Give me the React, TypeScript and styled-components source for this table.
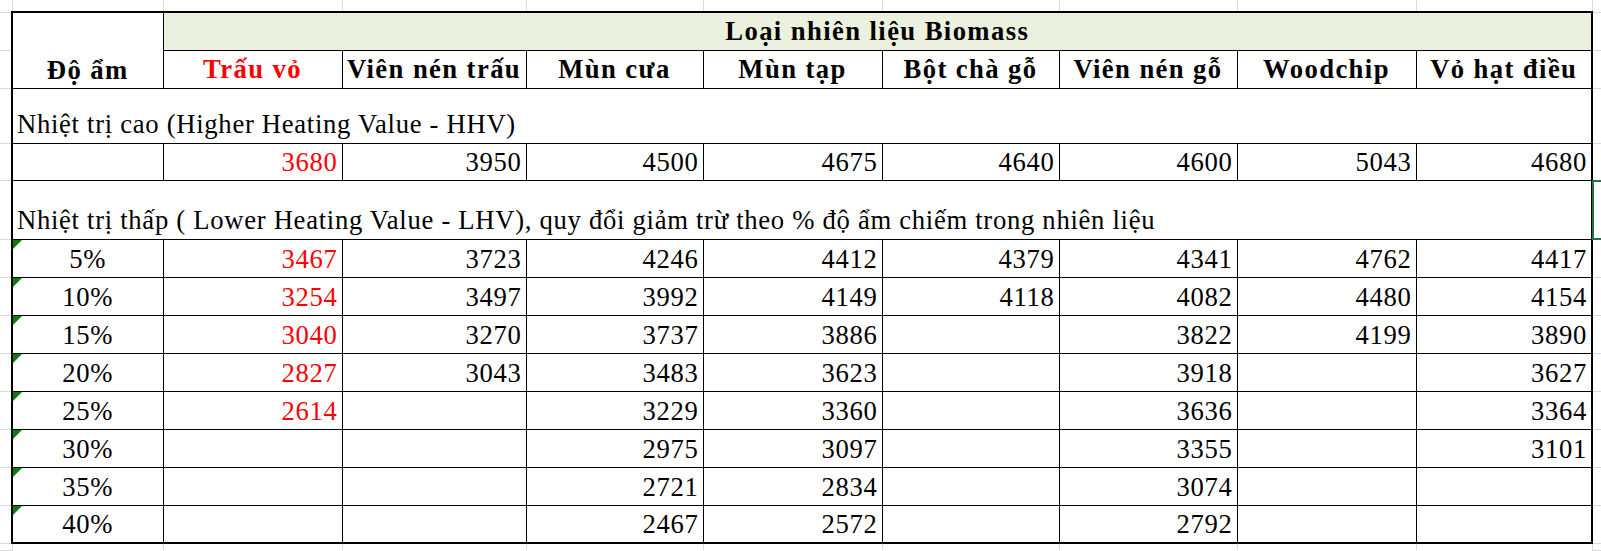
import React from "react";
import styled, { createGlobalStyle, css } from "styled-components";

const GlobalStyle = createGlobalStyle`
  html, body {
    margin: 0;
    padding: 0;
    background: #ffffff;
  }
  body {
    font-family: "Liberation Serif", "Times New Roman", serif;
    color: #000000;
  }
`;

const GRID = "#d9d9d9";
const INK = "#000000";

const Sheet = styled.table`
  border-collapse: collapse;
  table-layout: fixed;
  width: 1601px;
  font-family: "Liberation Serif", "Times New Roman", serif;
  font-size: 26.67px;
  letter-spacing: 0.7px;
`;

const Row = styled.tr<{ $h: number }>`
  height: ${({ $h }) => $h}px;
`;

const BaseCell = css`
  border: 1px solid ${INK};
  padding: 0 4px 2px 4px;
  vertical-align: bottom;
  white-space: nowrap;
  overflow: hidden;
`;

const Gutter = styled.td<{ $side: "top" | "bottom" | "left" | "right" | "corner" }>`
  padding: 0;
  position: relative;
  ${({ $side }) =>
    $side === "top" &&
    css`
      border-right: 1px solid ${GRID};
      border-bottom: 2px solid ${INK};
    `}
  ${({ $side }) =>
    $side === "bottom" &&
    css`
      border-right: 1px solid ${GRID};
      border-top: 2px solid ${INK};
    `}
  ${({ $side }) =>
    $side === "left" &&
    css`
      border-bottom: 1px solid ${GRID};
      border-right: 2px solid ${INK};
    `}
  ${({ $side }) =>
    $side === "right" &&
    css`
      border-bottom: 1px solid ${GRID};
      border-left: 2px solid ${INK};
    `}
  ${({ $side }) =>
    $side === "corner" &&
    css`
      border-right: 1px solid ${GRID};
      border-bottom: 1px solid ${GRID};
    `}
`;

// Excel's active cell frame, sitting right of the table
const SelectedGutter = styled(Gutter)`
  &::after {
    content: "";
    position: absolute;
    top: -1px;
    bottom: -1px;
    left: -1px;
    width: 14px;
    border: 2px solid #217346;
  }
`;

const HeadCell = styled.th<{ $red?: boolean; $fill?: boolean; $bottom?: boolean }>`
  ${BaseCell}
  font-weight: bold;
  letter-spacing: 1.4px;
  text-align: center;
  vertical-align: ${({ $bottom }) => ($bottom ? "bottom" : "middle")};
  padding-bottom: ${({ $bottom }) => ($bottom ? "2px" : "0")};
  color: ${({ $red }) => ($red ? "#ff0000" : INK)};
  background: ${({ $fill }) => ($fill ? "#ebf1de" : "transparent")};
`;

const SectionCell = styled.td`
  ${BaseCell}
  text-align: left;
  padding-bottom: 3px;
`;

const LabelCell = styled.td`
  ${BaseCell}
  text-align: center;
  position: relative;

  &::before {
    content: "";
    position: absolute;
    top: 0;
    left: 0;
    width: 0;
    height: 0;
    border-top: 9px solid #0c7d0c;
    border-right: 9px solid transparent;
  }
`;

const NumCell = styled.td<{ $red?: boolean }>`
  ${BaseCell}
  text-align: right;
  color: ${({ $red }) => ($red ? "#ff0000" : INK)};
`;

const colWidths = [12, 151, 179, 184, 177, 179, 177, 178, 179, 176, 9];

const fuels = [
  "Trấu vỏ",
  "Viên nén trấu",
  "Mùn cưa",
  "Mùn tạp",
  "Bột chà gỗ",
  "Viên nén gỗ",
  "Woodchip",
  "Vỏ hạt điều",
];

const hhv = ["3680", "3950", "4500", "4675", "4640", "4600", "5043", "4680"];

const lhv: { label: string; values: string[] }[] = [
  { label: "5%", values: ["3467", "3723", "4246", "4412", "4379", "4341", "4762", "4417"] },
  { label: "10%", values: ["3254", "3497", "3992", "4149", "4118", "4082", "4480", "4154"] },
  { label: "15%", values: ["3040", "3270", "3737", "3886", "", "3822", "4199", "3890"] },
  { label: "20%", values: ["2827", "3043", "3483", "3623", "", "3918", "", "3627"] },
  { label: "25%", values: ["2614", "", "3229", "3360", "", "3636", "", "3364"] },
  { label: "30%", values: ["", "", "2975", "3097", "", "3355", "", "3101"] },
  { label: "35%", values: ["", "", "2721", "2834", "", "3074", "", ""] },
  { label: "40%", values: ["", "", "2467", "2572", "", "2792", "", ""] },
];

const App = () => {
  return (
    <>
      <GlobalStyle />
      <Sheet>
        <colgroup>
          {colWidths.map((w, i) => (
            <col key={i} style={{ width: w }} />
          ))}
        </colgroup>
        <tbody>
          <Row $h={12}>
            <Gutter $side="corner" />
            {fuels.concat("").map((_, i) => (
              <Gutter key={i} $side="top" />
            ))}
            <Gutter $side="corner" />
          </Row>

          <Row $h={38}>
            <Gutter $side="left" />
            <HeadCell rowSpan={2} $bottom>
              Độ ẩm
            </HeadCell>
            <HeadCell colSpan={8} $fill>
              Loại nhiên liệu Biomass
            </HeadCell>
            <Gutter $side="right" />
          </Row>

          <Row $h={38}>
            <Gutter $side="left" />
            {fuels.map((f, i) => (
              <HeadCell key={f} $red={i === 0}>
                {f}
              </HeadCell>
            ))}
            <Gutter $side="right" />
          </Row>

          <Row $h={55}>
            <Gutter $side="left" />
            <SectionCell colSpan={9}>Nhiệt trị cao (Higher Heating Value - HHV)</SectionCell>
            <Gutter $side="right" />
          </Row>

          <Row $h={37}>
            <Gutter $side="left" />
            <NumCell />
            {hhv.map((v, i) => (
              <NumCell key={i} $red={i === 0}>
                {v}
              </NumCell>
            ))}
            <Gutter $side="right" />
          </Row>

          <Row $h={59}>
            <Gutter $side="left" />
            <SectionCell colSpan={9}>
              Nhiệt trị thấp ( Lower Heating Value - LHV), quy đổi giảm trừ theo % độ ẩm chiếm trong nhiên liệu
            </SectionCell>
            <SelectedGutter $side="right" />
          </Row>

          {lhv.map((row) => (
            <Row key={row.label} $h={38}>
              <Gutter $side="left" />
              <LabelCell>{row.label}</LabelCell>
              {row.values.map((v, i) => (
                <NumCell key={i} $red={i === 0}>
                  {v}
                </NumCell>
              ))}
              <Gutter $side="right" />
            </Row>
          ))}

          <Row $h={7}>
            <Gutter $side="corner" />
            {fuels.concat("").map((_, i) => (
              <Gutter key={i} $side="bottom" />
            ))}
            <Gutter $side="corner" />
          </Row>
        </tbody>
      </Sheet>
    </>
  );
};

export default App;
